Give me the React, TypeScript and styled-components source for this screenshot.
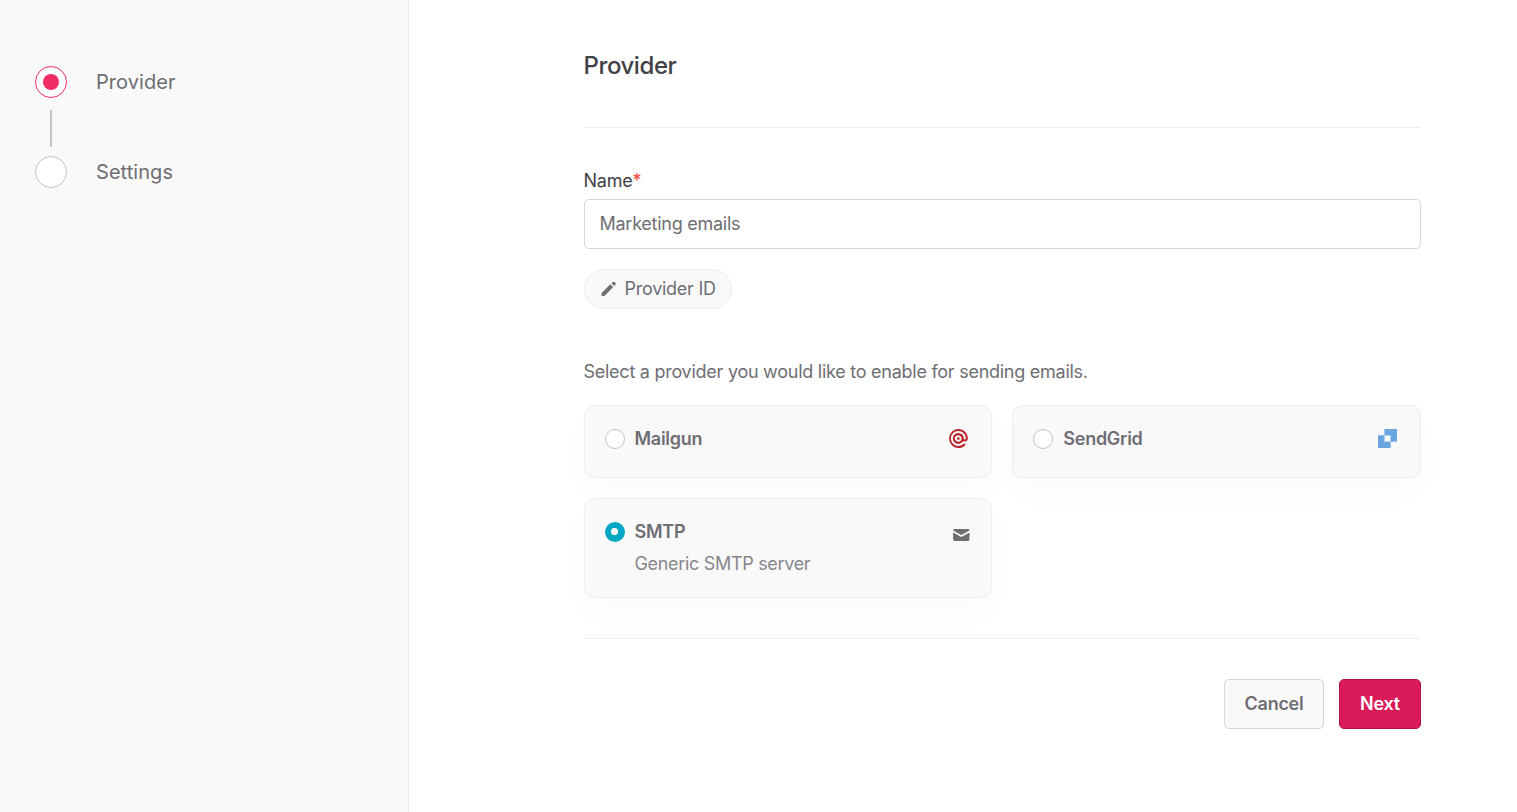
import React from 'react';
import styled, { createGlobalStyle, css } from 'styled-components';
import { SiMailgun } from 'react-icons/si';

const GlobalStyle = createGlobalStyle`
  *, *::before, *::after { box-sizing: border-box; }
  body {
    margin: 0;
    background: #fff;
    color: #6e6e73;
    font-family: Inter, "Liberation Sans", sans-serif;
    font-size: 18px;
    line-height: 26px;
    letter-spacing: -0.26px;
  }
  h1, p { margin: 0; }
`;

const Page = styled.div`
  display: grid;
  grid-template-columns: 409px 1fr;
  height: 100vh;
  min-height: 812px;
`;

const Sidebar = styled.aside`
  padding: 66px 34px 0 35px;
  background: #f9f9fa;
  border-right: 1px solid #ededf0;
`;

const Steps = styled.ol`
  display: flex;
  flex-direction: column;
  margin: 0;
  padding: 0;
  list-style: none;
`;

const Step = styled.li`
  display: flex;
  align-items: center;
  gap: 29px;
  height: 32px;
  font-size: 20px;
  letter-spacing: 0.06px;
`;

const StepMark = styled.span<{ $current?: boolean }>`
  display: grid;
  place-items: center;
  width: 32px;
  height: 32px;
  border: 1.25px solid ${(p) => (p.$current ? '#f02e65' : '#c3c3c6')};
  border-radius: 50%;
  background: #fff;
  ${(p) =>
    p.$current &&
    css`
      &::after {
        content: '';
        width: 16px;
        height: 16px;
        border-radius: 50%;
        background: #f02e65;
      }
    `}
`;

const StepLine = styled.li`
  width: 2px;
  height: 37px;
  margin: 12px 0 9px 15px;
  background: #c3c3c6;
`;

const Main = styled.main`
  width: 837px;
  margin-left: 175px;
  padding-top: 48px;
`;

const Heading = styled.h1`
  height: 80px;
  border-bottom: 1px solid #ededf0;
  color: #414146;
  font-size: 24px;
  font-weight: 500;
  line-height: 35px;
  letter-spacing: -0.42px;
  text-indent: -0.5px;
`;

const Label = styled.label`
  display: block;
  margin-top: 40px;
  color: #414146;
  text-indent: -0.5px;
`;

const Required = styled.span`
  color: #ff453a;
`;

const Input = styled.input`
  display: block;
  width: 100%;
  height: 50px;
  margin-top: 5px;
  padding: 0 14.5px 1px;
  border: 1px solid #d8d8db;
  border-radius: 5px;
  background: #fff;
  font: inherit;
  letter-spacing: inherit;
  &::placeholder { color: #6e6e73; opacity: 1; }
`;

const Pill = styled.button`
  display: flex;
  align-items: center;
  gap: 5.5px;
  width: 148px;
  height: 40px;
  margin-top: 20px;
  padding: 0 0 0 14px;
  border: 1px solid #ededf0;
  border-radius: 20px;
  background: #f9f9fa;
  color: inherit;
  font: inherit;
  letter-spacing: inherit;
  white-space: nowrap;
`;

const Hint = styled.p`
  margin-top: 50px;
  text-indent: -0.5px;
`;

const Cards = styled.div`
  display: grid;
  grid-template-columns: 408px 409px;
  gap: 20px;
  margin-top: 20px;
`;

const Card = styled.label<{ $tall?: boolean }>`
  display: flex;
  align-items: flex-start;
  height: ${(p) => (p.$tall ? 100 : 73)}px;
  padding: 20px;
  border: 1px solid #ededf0;
  border-radius: 10px;
  background: #f9f9fa;
  box-shadow: 0 15px 40px rgba(55, 59, 77, 0.02);
`;

const Radio = styled.span<{ $checked?: boolean }>`
  flex: none;
  width: 20px;
  height: 20px;
  margin-top: 3px;
  border: ${(p) => (p.$checked ? 'none' : '1px solid #c3c3c6')};
  border-radius: 50%;
  background: ${(p) =>
    p.$checked ? 'radial-gradient(circle at 9.5px 9.5px, #fff 3.2px, #00a7c3 4px)' : '#fff'};
`;

const CardText = styled.div<{ $inset?: number }>`
  flex: 1;
  margin-left: ${(p) => p.$inset ?? 9.5}px;
`;

const CardTitle = styled.div`
  font-weight: 600;
`;

const CardDetail = styled.div`
  margin-top: 6px;
  color: #87878b;
  letter-spacing: -0.32px;
`;

const CardIcon = styled.span<{ $color: string; $shift?: string }>`
  display: flex;
  margin: ${(p) => p.$shift || '3px 3px 0 0'};
  color: ${(p) => p.$color};
`;

const Footer = styled.footer`
  display: flex;
  justify-content: flex-end;
  gap: 15px;
  margin-top: 40px;
  padding-top: 40px;
  border-top: 1px solid #ededf0;
`;

const Button = styled.button<{ $primary?: boolean }>`
  width: ${(p) => (p.$primary ? 82 : 100)}px;
  height: 50px;
  padding: 0;
  border: 1px solid ${(p) => (p.$primary ? '#b8124a' : '#d8d8db')};
  border-radius: 5px;
  background: ${(p) => (p.$primary ? '#db1a5a' : '#f9f9fa')};
  color: ${(p) => (p.$primary ? '#fff' : '#6e6e73')};
  font: inherit;
  font-weight: 600;
  letter-spacing: inherit;
`;

const PencilIcon = () => (
  <svg width="20" height="20" viewBox="0 0 20 20" fill="currentColor">
    <path d="M13.3 3.4a2 2 0 1 1 2.828 2.828l-.793.793-2.828-2.828.793-.793zM11.379 5.3 2.6 14.1V17h2.828l8.78-8.879-2.83-2.828z" />
  </svg>
);

const SendGridIcon = () => (
  <svg width="19" height="19" viewBox="0 0 19 19">
    <path fill="#69a6df" d="M6.33 0H19v12.67H6.33zM0 6.33h12.67V19H0z" />
    <path fill="#f9f9fa" d="M6.5 6.5h6v6h-6z" />
    <path fill="none" stroke="#a9ccee" strokeWidth=".7" d="M6.33 0v6.33H0M12.67 19v-6.33H19M6.33 6.33h6.34v6.34H6.33z" />
  </svg>
);

const MailIcon = () => (
  <svg width="20" height="20" viewBox="0 0 20 20" fill="currentColor">
    <path d="M2.1 5.4A1.6 1.6 0 0 1 3.7 4h13.2a1.6 1.6 0 0 1 1.6 1.4L10.3 10.1z" />
    <path d="m18.5 7.4-8.2 4.5-8.2-4.5v6.9A1.7 1.7 0 0 0 3.8 16h13a1.7 1.7 0 0 0 1.7-1.7z" />
  </svg>
);

export default function App() {
  return (
    <>
      <GlobalStyle />
      <Page>
        <Sidebar>
          <Steps>
            <Step><StepMark $current />Provider</Step>
            <StepLine aria-hidden />
            <Step><StepMark />Settings</Step>
          </Steps>
        </Sidebar>
        <Main>
          <Heading>Provider</Heading>
          <Label htmlFor="name">Name<Required>*</Required></Label>
          <Input id="name" placeholder="Marketing emails" />
          <Pill type="button"><PencilIcon />Provider ID</Pill>
          <Hint>Select a provider you would like to enable for sending emails.</Hint>
          <Cards>
            <Card>
              <Radio />
              <CardText><CardTitle>Mailgun</CardTitle></CardText>
              <CardIcon $color="#b9252b"><SiMailgun size={19} /></CardIcon>
            </Card>
            <Card>
              <Radio />
              <CardText $inset={10.3}><CardTitle>SendGrid</CardTitle></CardText>
              <CardIcon $color="#69a6df"><SendGridIcon /></CardIcon>
            </Card>
            <Card $tall>
              <Radio $checked />
              <CardText>
                <CardTitle>SMTP</CardTitle>
                <CardDetail>Generic SMTP server</CardDetail>
              </CardText>
              <CardIcon $color="#6c6c71" $shift="6px 0 0 0"><MailIcon /></CardIcon>
            </Card>
          </Cards>
          <Footer>
            <Button type="button">Cancel</Button>
            <Button type="button" $primary>Next</Button>
          </Footer>
        </Main>
      </Page>
    </>
  );
}
